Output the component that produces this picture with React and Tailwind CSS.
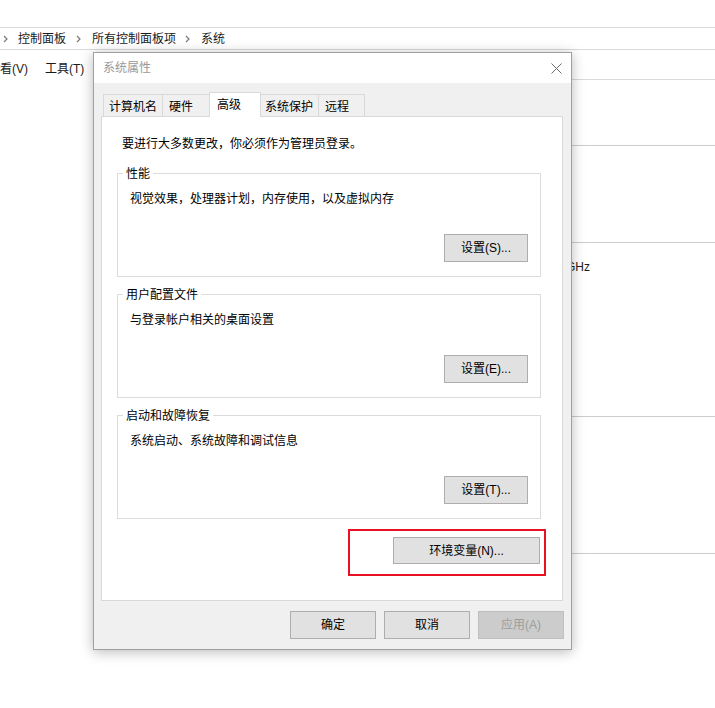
import React from 'react';

const Chevron = ({ className = '' }) => (
  <svg width="5" height="8" viewBox="0 0 5 8" className={`shrink-0 ${className}`}>
    <path d="M1 1l3 3-3 3" fill="none" stroke="#7a7a7a" strokeWidth="1.2" />
  </svg>
);

const WinButton = ({ children, className = '', disabled }) => (
  <button
    type="button"
    className={`flex items-center justify-center border text-[12px] leading-[16px] ${
      disabled ? 'bg-[#cccccc] border-[#bfbfbf] text-[#9d9d9d]' : 'bg-[#e1e1e1] border-[#adadad] text-black'
    } ${className}`}
  >
    {children}
  </button>
);

const GroupBox = ({ title, desc, button }) => (
  <div className="relative w-[424px] h-[104px] border border-[#dcdcdc] pt-[17px] pl-[12px] pr-[12px]">
    <span className="absolute left-[5px] top-[-8px] bg-white px-[3px] leading-[16px]">{title}</span>
    <p className="leading-[16px]">{desc}</p>
    <div className="mt-[27px] flex justify-end">
      <WinButton className="w-[84px] h-[28px]">{button}</WinButton>
    </div>
  </div>
);

const tabs = [
  { label: '计算机名', cls: 'w-[60px] pl-[5px]' },
  { label: '硬件', cls: 'w-[48px] pl-[6px] -ml-px' },
  { label: '高级', cls: 'w-[52px] pl-[7px] -ml-px', active: true },
  { label: '系统保护', cls: 'w-[59px] pl-[4px] -ml-px' },
  { label: '远程', cls: 'w-[47px] pl-[6px] -ml-px' },
];

export default function App() {
  return (
    <div className="relative w-[715px] h-[708px] overflow-hidden bg-white text-[12px] text-[#1a1a1a] font-['Liberation_Sans','Noto_Sans_CJK_SC',sans-serif]">
      {/* explorer window behind */}
      <div className="h-[27px]" />
      <div className="h-[22px] border-t border-[#dadada] flex items-center leading-[16px]">
        <Chevron className="ml-[3px] mr-[10px]" />
        <span>控制面板</span>
        <Chevron className="ml-[10px] mr-[11px]" />
        <span>所有控制面板项</span>
        <Chevron className="ml-[9px] mr-[11px]" />
        <span>系统</span>
      </div>
      <div className="h-[30px] border-t border-[#dadada] flex pt-[11px] leading-[16px]">
        <span className="ml-[-12px]">查看(V)</span>
        <span className="ml-[17px]">工具(T)</span>
      </div>
      <div className="border-t border-[#dadada] ml-[300px]">
        <div className="h-[65px]" />
        <div className="h-[97px] border-t border-[#cccccc]" />
        <div className="h-[174px] border-t border-[#cccccc] pt-[16px] pr-[125px] text-right leading-[16px]">
          2.60GHz
        </div>
        <div className="h-[137px] border-t border-[#cccccc]" />
        <div className="border-t border-[#cccccc]" />
      </div>

      {/* system properties dialog */}
      <div className="absolute left-[93px] top-[52px] w-[479px] h-[598px] border border-[#a0a0a0] bg-[#f0f0f0] shadow-[0_2px_12px_rgba(0,0,0,0.28)] text-black">
        <div className="h-[30px] bg-white flex items-center justify-between pl-[9px] pr-[9px]">
          <span className="text-[#999999] leading-[16px]">系统属性</span>
          <svg width="11" height="11" viewBox="0 0 11 11">
            <path d="M0.5 0.5L10.5 10.5M10.5 0.5L0.5 10.5" stroke="#6b6b6b" strokeWidth="1" />
          </svg>
        </div>

        <div className="pt-[9px] pl-[7px]">
          <div className="flex items-end h-[24px] pl-[2px]">
            {tabs.map((t) =>
              t.active ? (
                <div
                  key={t.label}
                  className={`relative z-10 h-[25px] mb-[-1px] bg-white border-l border-t border-r border-[#d9d9d9] pt-[4px] leading-[16px] ${t.cls}`}
                >
                  {t.label}
                </div>
              ) : (
                <div
                  key={t.label}
                  className={`h-[22px] bg-[#f0f0f0] border-l border-t border-r border-[#d9d9d9] pt-[4px] leading-[16px] ${t.cls}`}
                >
                  {t.label}
                </div>
              )
            )}
          </div>

          <div className="w-[462px] h-[485px] bg-white border border-[#d9d9d9] pl-[15px]">
            <p className="pt-[19px] pl-[5px] leading-[16px]">要进行大多数更改，你必须作为管理员登录。</p>
            <div className="mt-[21px] flex flex-col gap-[17px]">
              <GroupBox title="性能" desc="视觉效果，处理器计划，内存使用，以及虚拟内存" button="设置(S)..." />
              <GroupBox title="用户配置文件" desc="与登录帐户相关的桌面设置" button="设置(E)..." />
              <GroupBox title="启动和故障恢复" desc="系统启动、系统故障和调试信息" button="设置(T)..." />
            </div>
            <div className="mt-[10px] flex justify-end pr-[16px]">
              <div className="border-2 border-[#e81123] pt-[6px] pb-[10px] pl-[43px] pr-[4px]">
                <WinButton className="w-[147px] h-[27px]">环境变量(N)...</WinButton>
              </div>
            </div>
          </div>

          <div className="mt-[10px] flex justify-end gap-[8px] pr-[7px]">
            <WinButton className="w-[86px] h-[28px]">确定</WinButton>
            <WinButton className="w-[86px] h-[28px]">取消</WinButton>
            <WinButton className="w-[86px] h-[28px]" disabled>
              应用(A)
            </WinButton>
          </div>
        </div>
      </div>
    </div>
  );
}
